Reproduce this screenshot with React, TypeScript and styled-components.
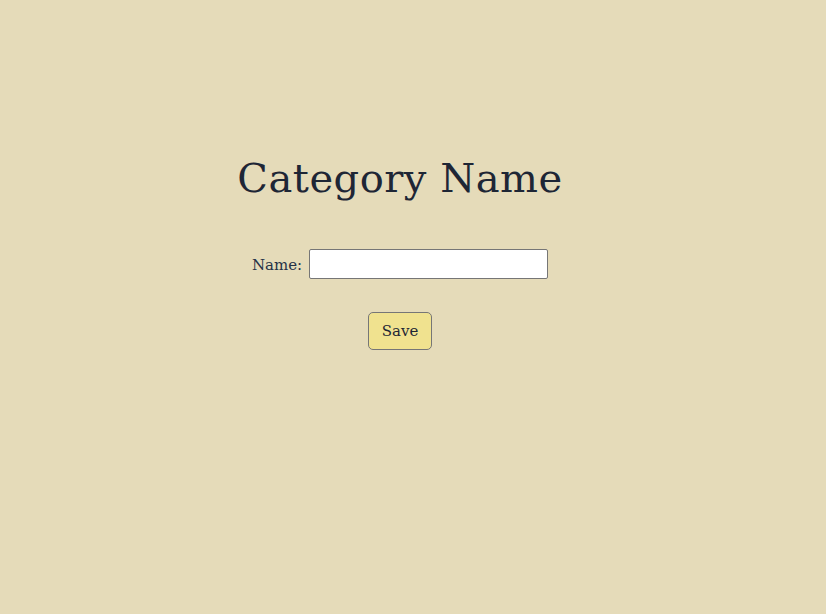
import React, { useState } from "react"
import styled, { createGlobalStyle } from "styled-components"

const GlobalStyle = createGlobalStyle`
    html, body {
        margin: 0;
        background: #e5dbb9;
    }
    body {
        font-family: "DejaVu Serif", "Liberation Serif", serif;
        color: #1e2635;
    }
`

const Page = styled.div`
    width: 800px;
    min-height: 614px;
    display: flex;
    flex-direction: column;
    align-items: center;
    padding-top: 148px;
    box-sizing: border-box;
`

const Title = styled.h1`
    margin: 0;
    font-size: 40px;
    font-weight: normal;
    letter-spacing: 0.5px;
    line-height: 60px;
`

const Form = styled.form`
    display: flex;
    flex-direction: column;
    align-items: center;
    margin-top: 41px;
    gap: 33px;
`

const Row = styled.div`
    display: flex;
    align-items: center;
    gap: 7px;
`

const Label = styled.label`
    font-size: 15px;
    color: #243147;
    padding-top: 2px;
`

const Input = styled.input`
    width: 239px;
    height: 30px;
    box-sizing: border-box;
    border: 1px solid #767676;
    border-radius: 2px;
    background: #fff;
    font-family: inherit;
    font-size: 15px;
    padding: 2px 4px;
`

const SaveButton = styled.button`
    width: 64px;
    height: 38px;
    box-sizing: border-box;
    background: #f0e28f;
    border: 1px solid #767676;
    border-radius: 5px;
    font-family: "DejaVu Serif", "Liberation Serif", serif;
    font-size: 15px;
    color: #1e2635;
    cursor: pointer;
`

function App() {
    const [name, setName] = useState("")

    return (
        <>
            <GlobalStyle />
            <Page>
                <Title>Category Name</Title>
                <Form onSubmit={(e) => e.preventDefault()}>
                    <Row>
                        <Label htmlFor="name">Name:</Label>
                        <Input id="name" type="text" value={name} onChange={(e) => setName(e.target.value)} />
                    </Row>
                    <SaveButton type="submit">Save</SaveButton>
                </Form>
            </Page>
        </>
    )
}

export default App
